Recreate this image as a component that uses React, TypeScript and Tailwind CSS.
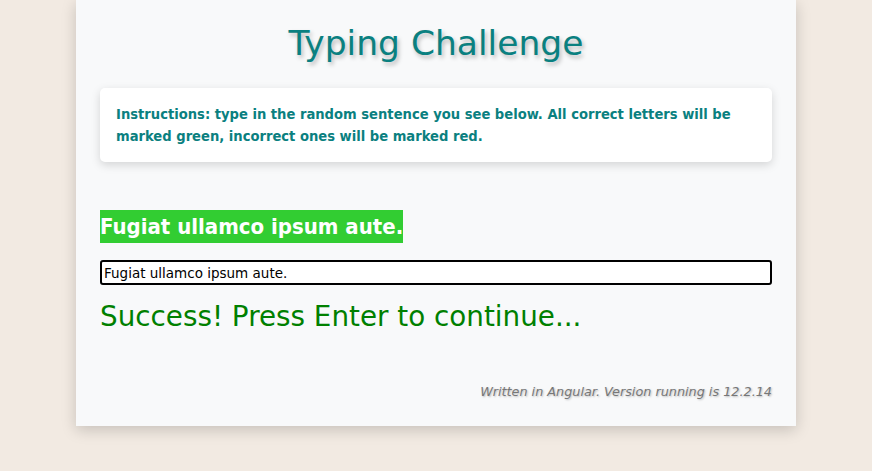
import React, { useState } from "react";

const SENTENCE = "Fugiat ullamco ipsum aute.";

const App: React.FC = () => {
    const [typed, setTyped] = useState(SENTENCE);

    return (
        <div
            className="min-h-[471px] w-full bg-[#f2eae2] flex justify-center"
            style={{ fontFamily: '"DejaVu Sans", Verdana, sans-serif' }}
        >
            <div className="w-[720px] h-[426px] bg-[#f8f9fa] shadow-[0_4px_14px_rgba(0,0,0,0.18)] px-6 flex flex-col">
                <h1 className="text-center text-[34.5px] leading-[44px] mt-[21px] text-[#0a8080] [text-shadow:2px_3px_4px_rgba(0,0,0,0.25)]">
                    Typing Challenge
                </h1>
                <div className="mt-[23px] bg-white rounded-[5px] shadow-[0_3px_10px_rgba(0,0,0,0.15)] px-4 py-[15px]">
                    <p className="font-['DejaVu_Sans_Condensed',sans-serif] text-[#0a8080] text-[14.6px] leading-[22px] font-bold">
                        Instructions: type in the random sentence you see below.
                        All correct letters will be marked green, incorrect ones
                        will be marked red.
                    </p>
                </div>
                <div className="mt-[48px] flex">
                    <h2 className="font-['DejaVu_Sans_Condensed',sans-serif] bg-[#32cd32] text-white font-bold text-[22px] leading-[33px]">
                        {SENTENCE}
                    </h2>
                </div>
                <input
                    value={typed}
                    onChange={(e) => setTyped(e.target.value)}
                    className="mt-[17px] h-[25px] w-full border-2 border-black rounded-[3px] bg-white px-[2px] text-[13.5px] text-black outline-none"
                />
                <p className="mt-[13px] text-[27.8px] leading-[38px] text-[#008000]">
                    Success! Press Enter to continue...
                </p>
                <p className="mt-auto mb-[25px] text-right text-[12.8px] italic text-[#777] [text-shadow:1px_1px_2px_rgba(0,0,0,0.25)]">
                    Written in Angular. Version running is 12.2.14
                </p>
            </div>
        </div>
    );
};

export default App;
